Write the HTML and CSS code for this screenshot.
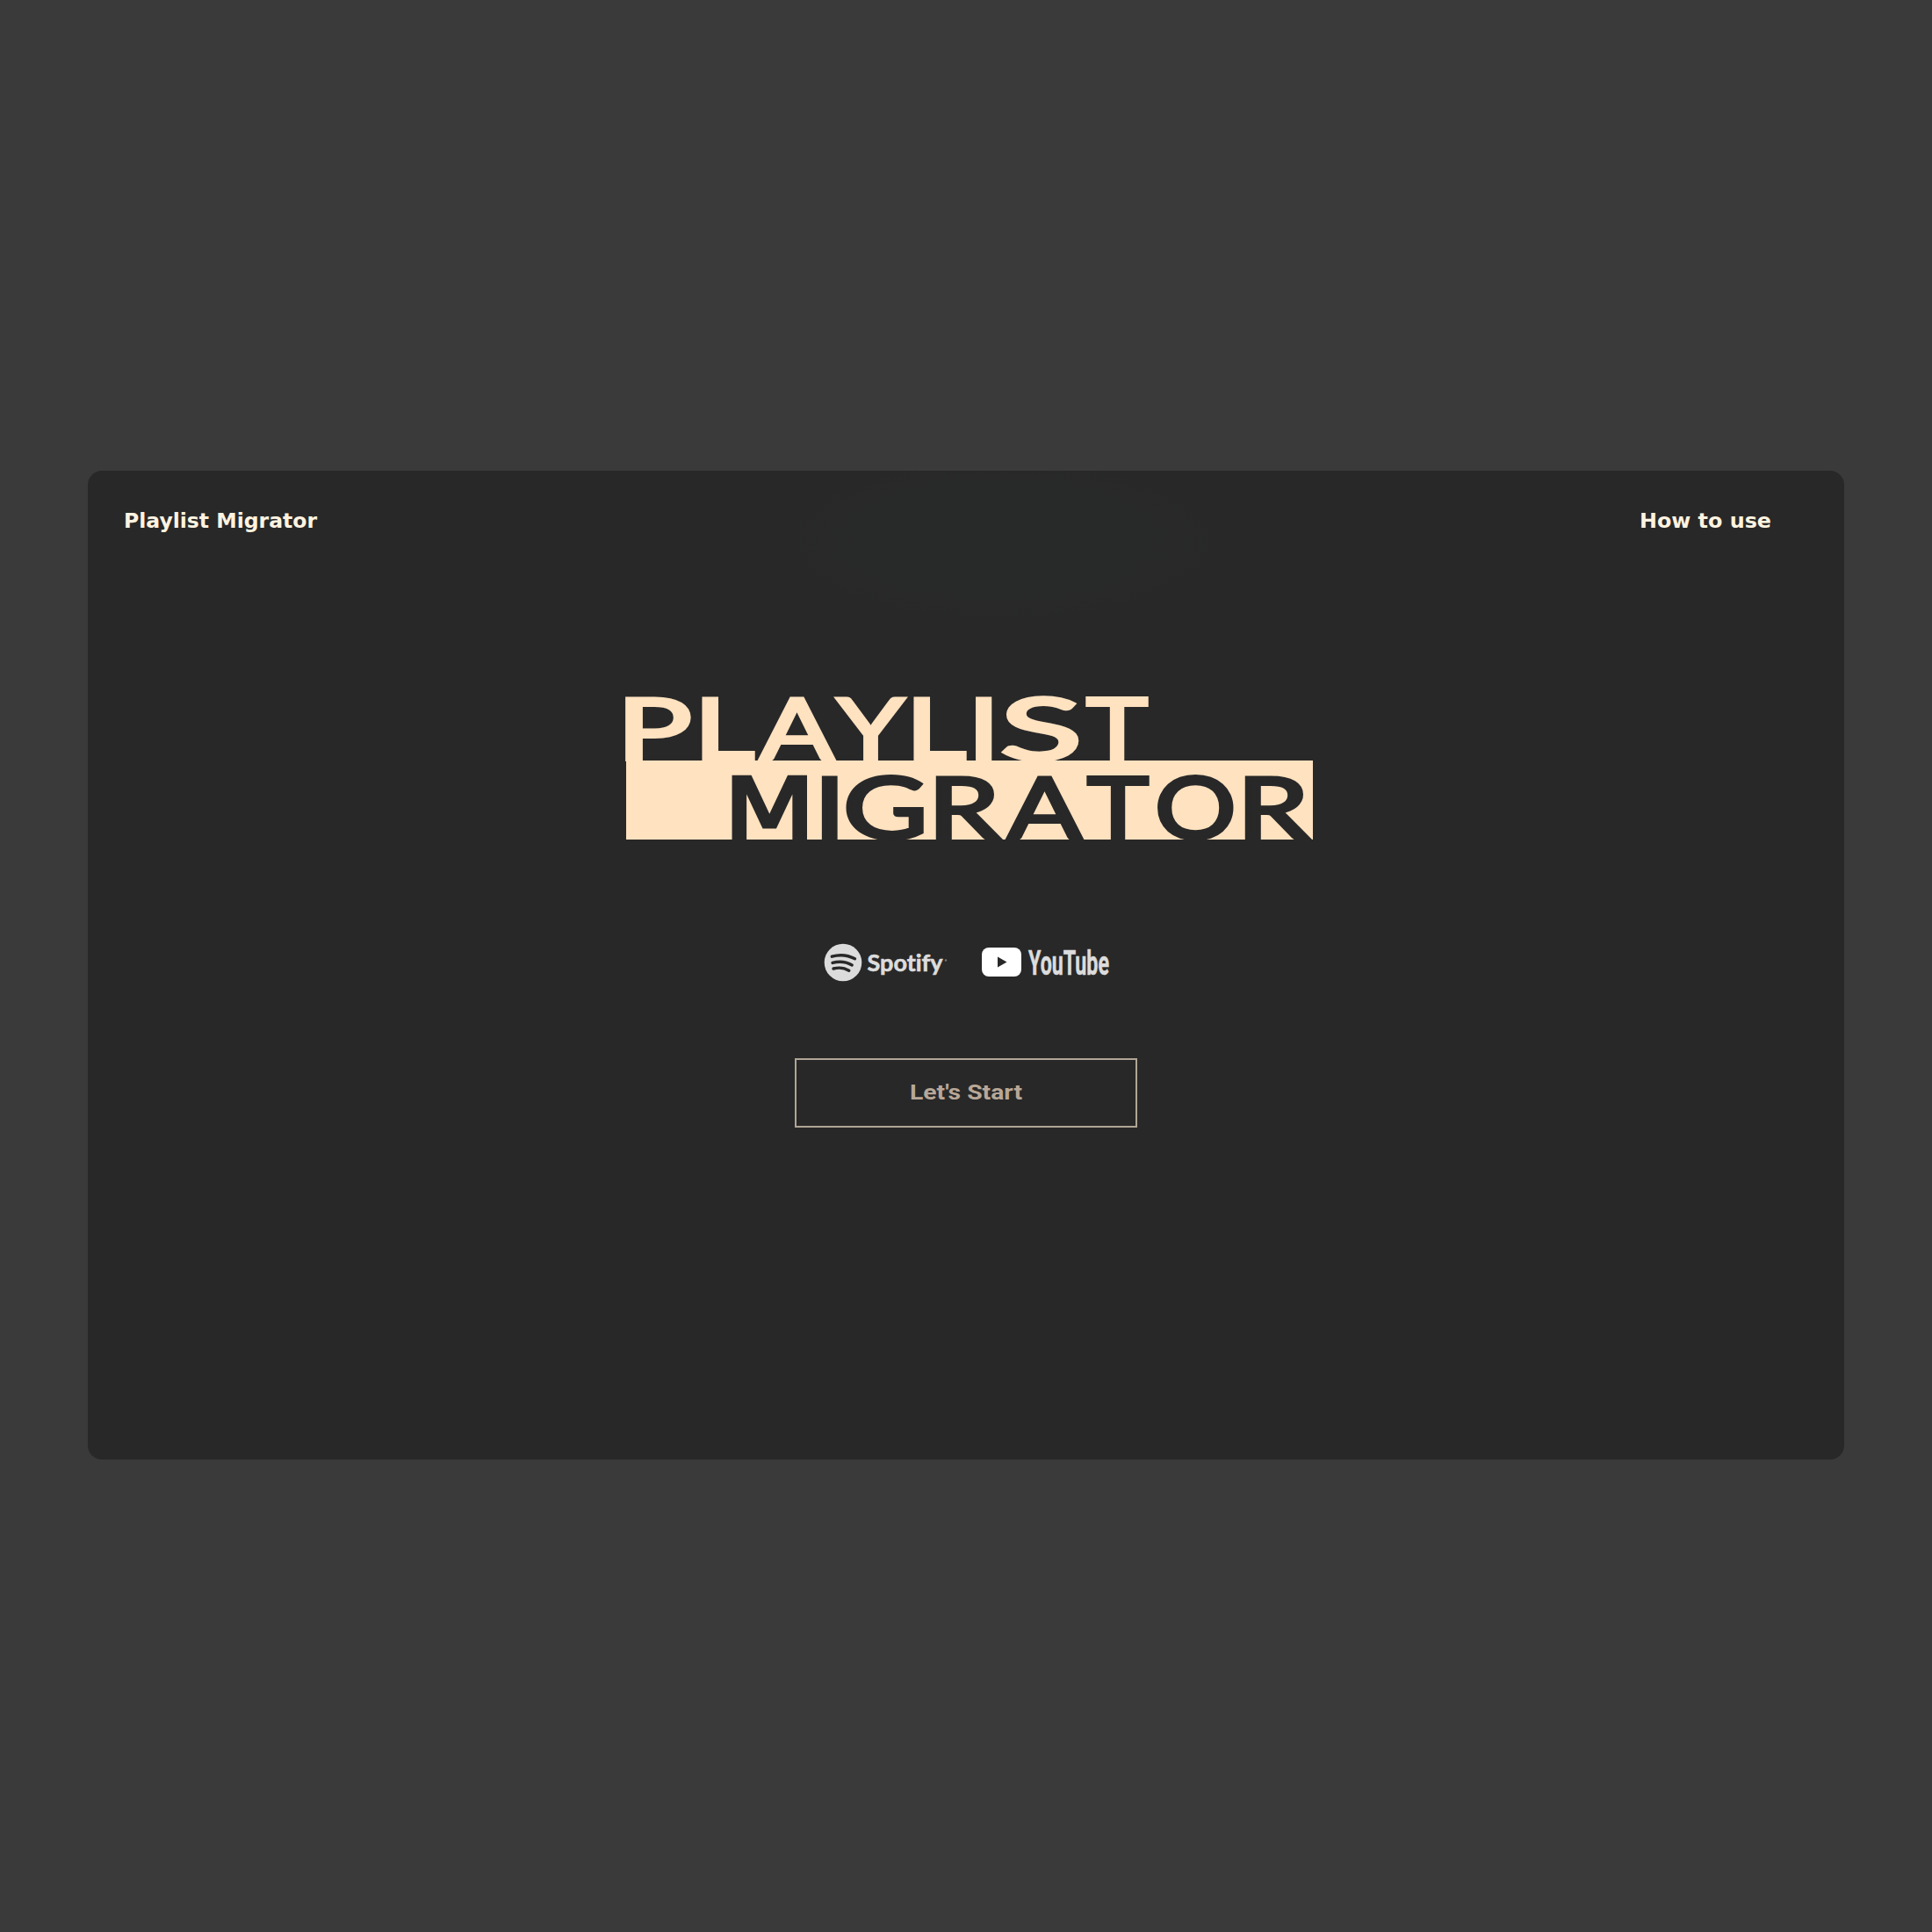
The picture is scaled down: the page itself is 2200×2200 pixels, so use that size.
FILE: index.html
```html
<!DOCTYPE html>
<html lang="en">
<head>
<meta charset="utf-8">
<title>Playlist Migrator</title>
<link rel="stylesheet" href="styles.css">
</head>
<body>
<main class="card">
  <header class="topbar">
    <svg class="nav-text" width="222" height="40" viewBox="0 0 222 40"><text x="0" y="29" textLength="220" lengthAdjust="spacingAndGlyphs">Playlist Migrator</text></svg>
    <svg class="nav-text" width="151" height="40" viewBox="0 0 151 40"><text x="0" y="29" textLength="150" lengthAdjust="spacingAndGlyphs">How to use</text></svg>
  </header>

  <svg class="wordmark" width="790" height="168" viewBox="705 790 790 168">
    <rect class="wordmark-band" x="713" y="866" width="782" height="90"/>
    <text class="word-top" y="864.5"><tspan x="702" textLength="86" lengthAdjust="spacingAndGlyphs">P</tspan><tspan x="790" textLength="69" lengthAdjust="spacingAndGlyphs">L</tspan><tspan x="865.5" textLength="84" lengthAdjust="spacingAndGlyphs">A</tspan><tspan x="953.5" textLength="76" lengthAdjust="spacingAndGlyphs">Y</tspan><tspan x="1031" textLength="69" lengthAdjust="spacingAndGlyphs">L</tspan><tspan x="1101.8" textLength="36.8" lengthAdjust="spacingAndGlyphs">I</tspan><tspan x="1138.5" textLength="94" lengthAdjust="spacingAndGlyphs">S</tspan><tspan x="1237" textLength="70" lengthAdjust="spacingAndGlyphs">T</tspan></text>
    <text class="word-bottom" y="955"><tspan class="m" x="824.2" textLength="104" lengthAdjust="spacingAndGlyphs">M</tspan><tspan x="926.7" textLength="36" lengthAdjust="spacingAndGlyphs">I</tspan><tspan x="960" textLength="96.5" lengthAdjust="spacingAndGlyphs">G</tspan><tspan x="1056.5" textLength="82" lengthAdjust="spacingAndGlyphs">R</tspan><tspan x="1147.500" textLength="84" lengthAdjust="spacingAndGlyphs">A</tspan><tspan x="1238" textLength="70" lengthAdjust="spacingAndGlyphs">T</tspan><tspan x="1315" textLength="92.500" lengthAdjust="spacingAndGlyphs">O</tspan><tspan x="1408.500" textLength="82" lengthAdjust="spacingAndGlyphs">R</tspan></text>
  </svg>

  <div class="services">
    <svg class="spotify" width="146" height="44" viewBox="0 0 146 44">
      <circle cx="24" cy="22" r="21.3"/>
      <g class="waves">
        <path d="M11.3 15.200c8.800-2.500 18.400-1.600 26.200 2.600"/>
        <path d="M12 22.400c7.600-2.100 15.500-1.300 22.200 2.500"/>
        <path d="M13 29c6.200-1.600 12.500-1 17.800 2.200"/>
      </g>
      <text x="51.500" y="31.800" textLength="86" lengthAdjust="spacingAndGlyphs">Spotify</text>
      <circle class="mark" cx="141" cy="19.500" r="1.200"/>
    </svg>
    <svg class="youtube" width="148" height="44" viewBox="0 0 148 44">
      <rect x="2" y="5" width="45" height="33" rx="8"/>
      <path class="play" d="M20 15.500v12l10.500-6z"/>
      <text x="55" y="35.500" textLength="92" lengthAdjust="spacingAndGlyphs">YouTube</text>
    </svg>
  </div>

  <button class="start"><svg width="130" height="40" viewBox="0 0 130 40"><text x="1" y="27" textLength="128" lengthAdjust="spacingAndGlyphs">Let's Start</text></svg></button>
</main>
</body>
</html>
```
FILE: styles.css
```css
* { box-sizing: border-box; }
body {
  margin: 0;
  min-height: 2200px;
  padding: 536px 100px 0;
  background: #3a3a3a;
}
svg { display: block; overflow: visible; }
.card {
  display: flex;
  flex-direction: column;
  align-items: center;
  height: 1126px;
  border-radius: 16px;
  background: radial-gradient(ellipse 250px 90px at 1040px 80px, #282a29 60%, transparent) #282828;
}
.topbar {
  display: flex;
  justify-content: space-between;
  align-items: center;
  width: 100%;
  height: 112px;
  padding: 0 82px 0 41px;
}
.nav-text {
  fill: #fff3e0;
  font: 700 23px "DejaVu Sans", sans-serif;
}
.wordmark {
  margin-top: 142px;
  font: 400 97px Lato, sans-serif;
  font-kerning: none;
}
.wordmark-band { fill: #ffe2c0; }
.word-top { fill: #ffe2c0; stroke: #ffe2c0; stroke-width: 4; }
.word-bottom { fill: #282828; stroke: #282828; stroke-width: 4; }
.m { font: 400 95.3px "DejaVu Sans", sans-serif; }
.services {
  display: flex;
  gap: 34px;
  margin-top: 116px;
}
.spotify { fill: #dcdcdc; font: 700 26px Lato, sans-serif; font-variant-ligatures: none; }
.spotify text { stroke: #dcdcdc; stroke-width: .6; }
.waves { fill: none; stroke: #282828; stroke-width: 3.4; stroke-linecap: round; }
.mark { fill: #777; }
.youtube { fill: #fff; font: 700 38px Roboto, sans-serif; }
.youtube text { fill: #dcdcdc; stroke: #dcdcdc; stroke-width: .6; }
.youtube .play { fill: #282828; }
.start {
  display: flex;
  align-items: center;
  justify-content: center;
  width: 390px;
  height: 79px;
  margin-top: 87px;
  padding: 0;
  border: 2px solid #b0a596;
  background: transparent;
  fill: #b8a797;
  font: 700 24.5px Roboto, sans-serif;
}
```
